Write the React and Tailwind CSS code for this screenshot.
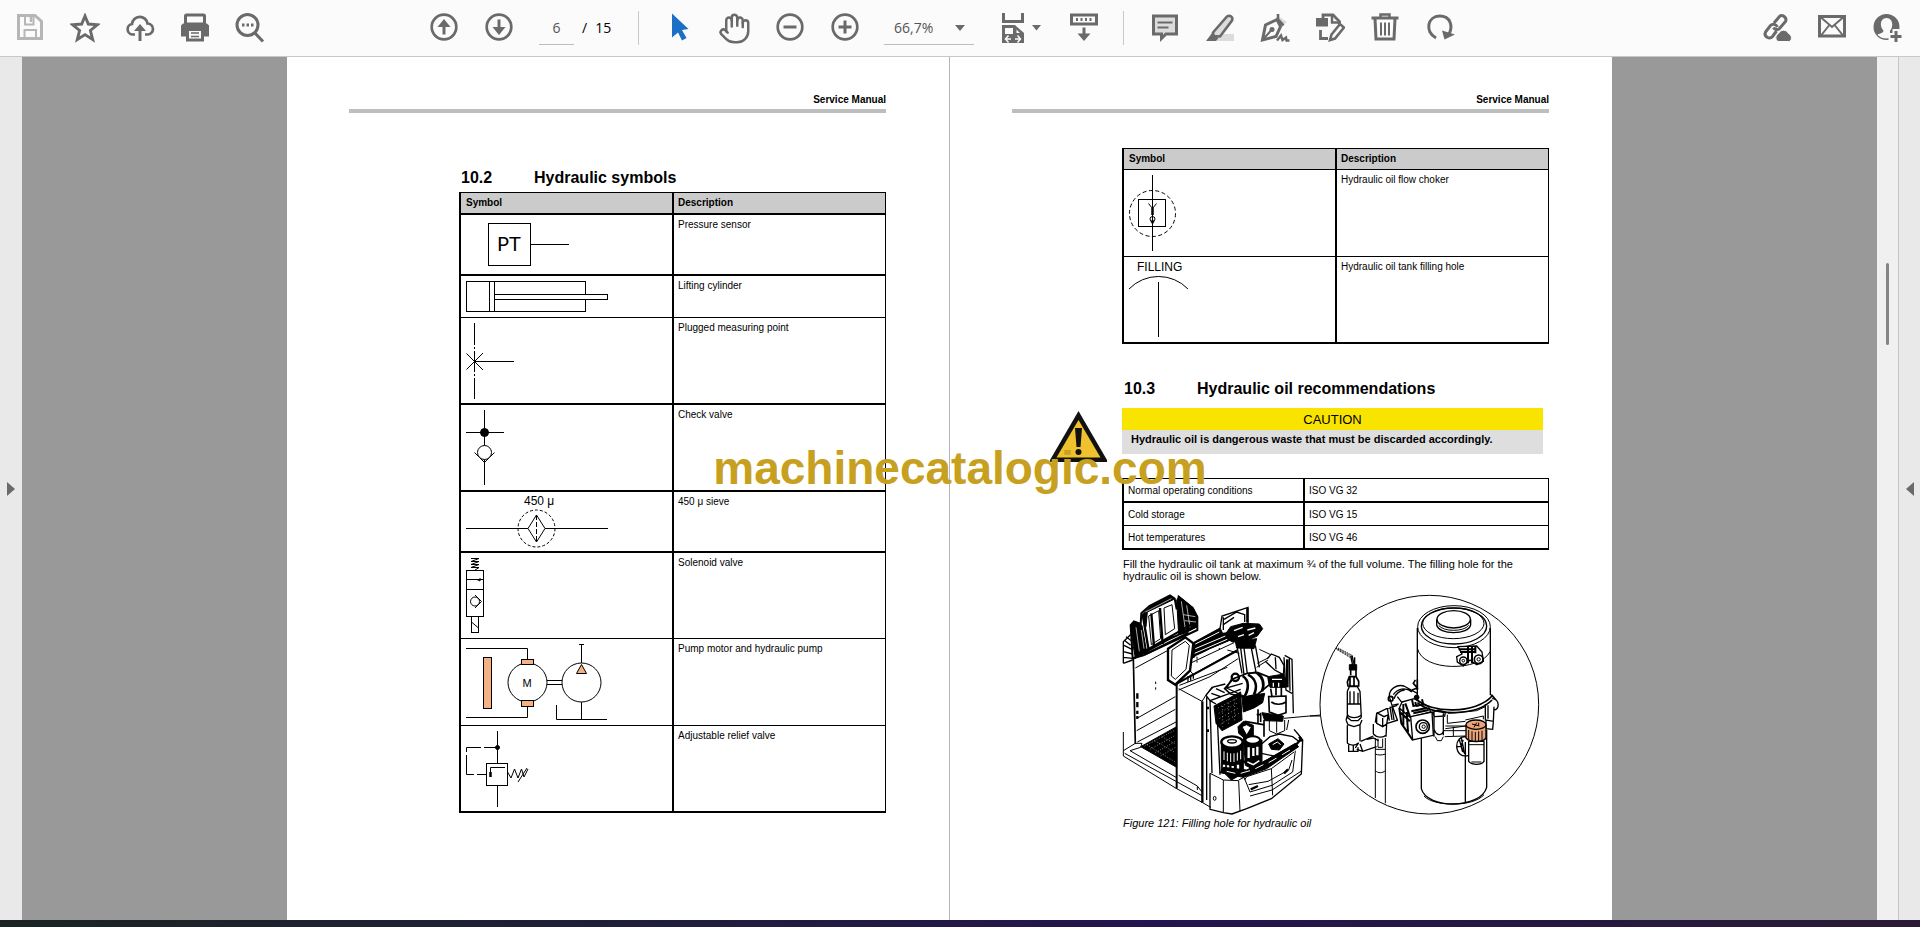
import { useState } from "react";
import { Hand } from "lucide-react";

function ToolIcon({ children }) {
  return (
    <svg width="30" height="30" viewBox="0 0 30 30" fill="none" stroke="#6a6a6a" strokeWidth="3">
      {children}
    </svg>
  );
}

function ToolButton({ label, children }) {
  return (
    <button aria-label={label} className="w-[55px] h-full flex items-center justify-center">
      {children}
    </button>
  );
}

function Separator() {
  return <div className="w-px h-[34px] bg-[#c9c9c9]" />;
}

function Toolbar() {
  const [page, setPage] = useState("6");
  const [zoom, setZoom] = useState("66,7%");

  return (
    <header className="h-[57px] shrink-0 flex items-center pl-[2px] pr-[6px] bg-[#fbfbfb] border-b border-[#c8c8c8] text-sm">
      {/* File tools */}
      <div className="flex h-full">
        <ToolButton label="Save">
          <ToolIcon>
            <g stroke="#b6b6b6">
              <path d="M3.500 2.500H20L26.500 8.500V25.500H3.500Z" />
              <path d="M10 2V11.500H18.500V2" strokeWidth="2" />
              <path d="M16 3.500V9" strokeWidth="2.500" />
              <path d="M9.500 25.500V17H21V25.500" strokeWidth="2" />
            </g>
          </ToolIcon>
        </ToolButton>
        <ToolButton label="Star">
          <ToolIcon>
            <path d="M15 3L18.300 11L27.500 11.700L20.400 17.500L22.700 26.500L15 21.600L7.300 26.500L9.600 17.500L2.500 11.700L11.700 11Z" strokeWidth="2.900" />
          </ToolIcon>
        </ToolButton>
        <ToolButton label="Upload">
          <ToolIcon>
            <path d="M10 21.500H7.500A5.300 5.300 0 0 1 7 11A7.800 7.800 0 0 1 22.500 10.500A5.500 5.500 0 0 1 22.500 21.500H20" strokeWidth="2.700" />
            <path d="M15 28V15" />
            <path d="M9 18L15 11L21 18Z" fill="#6a6a6a" stroke="none" />
          </ToolIcon>
        </ToolButton>
        <ToolButton label="Print">
          <ToolIcon>
            <rect x="5.500" y="2" width="19" height="9" rx="1" />
            <path d="M3 10.500H27L29 12.500V23.500H24V17.500H6V23.500H1V12.500Z" fill="#6a6a6a" stroke="none" />
            <rect x="7.500" y="16.500" width="15" height="10.500" fill="#fbfbfb" />
            <path d="M11 20H19M11 23.500H19" strokeWidth="1.500" />
          </ToolIcon>
        </ToolButton>
        <ToolButton label="Find">
          <ToolIcon>
            <circle cx="12.500" cy="12" r="10.500" />
            <path d="M19.500 19.500L28 28.500" />
            <path d="M7 12H18.500" strokeDasharray="2.500 2" />
          </ToolIcon>
        </ToolButton>
      </div>

      {/* Navigation and zoom */}
      <div className="flex items-center h-full ml-[139px]">
        <ToolButton label="Previous page">
          <ToolIcon>
            <circle cx="15" cy="14" r="12.300" strokeWidth="2.700" />
            <path d="M15 21.500V12" />
            <path d="M8.500 14L15 6L21.500 14Z" fill="#6a6a6a" stroke="none" />
          </ToolIcon>
        </ToolButton>
        <ToolButton label="Next page">
          <ToolIcon>
            <circle cx="15" cy="14" r="12.300" strokeWidth="2.700" />
            <path d="M15 6.500V17" />
            <path d="M8.500 14L15 22L21.500 14Z" fill="#6a6a6a" stroke="none" />
          </ToolIcon>
        </ToolButton>
        <div className="w-[112px] flex items-center pl-[13px] font-['Open_Sans',sans-serif]">
          <input
            aria-label="Page number"
            value={page}
            onChange={(e) => setPage(e.target.value)}
            className="w-[35px] h-[34px] text-center text-[#555] border-b border-[#bdbdbd] bg-transparent outline-none"
          />
          <span className="ml-2">/</span>
          <span className="ml-2">15</span>
        </div>
        <Separator />
        <div className="flex h-full ml-[13px]">
          <ToolButton label="Select">
            <ToolIcon>
              <path d="M7 0.500L23.500 16L17 17L21.500 25L17 27.500L13 19.500L7 24.500Z" fill="#1b70c5" stroke="none" />
            </ToolIcon>
          </ToolButton>
          <ToolButton label="Pan">
            <Hand size={33} color="#6a6a6a" strokeWidth={1.8} />
          </ToolButton>
          <ToolButton label="Zoom out">
            <ToolIcon>
              <circle cx="15" cy="14" r="12.300" strokeWidth="2.700" />
              <path d="M8.500 14H21.500" />
            </ToolIcon>
          </ToolButton>
          <ToolButton label="Zoom in">
            <ToolIcon>
              <circle cx="15" cy="14" r="12.300" strokeWidth="2.700" />
              <path d="M8.500 14H21.500M15 7.500V20.500" />
            </ToolIcon>
          </ToolButton>
        </div>
        <div className="relative ml-3 w-[90px] font-['Open_Sans',sans-serif]">
          <select
            aria-label="Zoom level"
            value={zoom}
            onChange={(e) => setZoom(e.target.value)}
            className="w-full h-[34px] pl-[10px] appearance-none text-[#555] border-b border-[#bdbdbd] bg-transparent outline-none"
          >
            <option>66,7%</option>
            <option>100%</option>
          </select>
          <svg className="absolute right-[9px] top-[14px] pointer-events-none" width="10" height="6" viewBox="0 0 10 6">
            <path d="M0 0H10L5 6Z" fill="#6a6a6a" />
          </svg>
        </div>
        <button aria-label="Fit width" className="ml-7 flex items-center gap-2">
          <svg width="22" height="30" viewBox="0 0 22 30" fill="none" stroke="#6a6a6a" strokeWidth="3">
            <path d="M1.500 0V8.500H20.500V0" />
            <path d="M0 12H13L22 20V30H0Z" fill="#6a6a6a" stroke="none" />
            <path d="M3 15H11V21H3Z M14.500 16.500V20H18Z" fill="#fbfbfb" stroke="none" />
            <path d="M3 26H9M13 26H19M6.500 22.500L3.500 26L6.500 29.500M15.500 22.500L18.500 26L15.500 29.500" stroke="#fbfbfb" strokeWidth="1.500" />
          </svg>
          <svg width="10" height="6" viewBox="0 0 10 6">
            <path d="M0 0H9L4.500 5.500Z" fill="#6a6a6a" />
          </svg>
        </button>
        <div className="flex h-full items-center ml-[14px]">
          <ToolButton label="Show toolbar">
            <ToolIcon>
              <rect x="2.500" y="2" width="25" height="9" />
              <path d="M7 6.500H24" strokeDasharray="2 2.500" />
              <path d="M15 14.500V22.500" />
              <path d="M8.500 20.500H21.500L15 28Z" fill="#6a6a6a" stroke="none" />
            </ToolIcon>
          </ToolButton>
        </div>
        <div className="ml-3">
          <Separator />
        </div>

        {/* Annotation tools */}
        <div className="flex h-full ml-[13px]">
          <ToolButton label="Comment">
            <ToolIcon>
              <path d="M3.500 3H26.500V21H16L11.500 25.500V21H3.500Z" fill="#dcdcdc" />
              <path d="M7.500 9.500H22.500M7.500 14.500H18.500" strokeWidth="2" />
            </ToolIcon>
          </ToolButton>
          <ToolButton label="Highlight">
            <ToolIcon>
              <path d="M10 21H29V28H8Z" fill="#dcdcdc" stroke="none" />
              <path d="M8 19.500L22 3.500C25 1.500 28.500 4 27 7.500L15 23.500L8.500 23Z" fill="#dcdcdc" strokeWidth="2.600" />
              <path d="M7 20L13.500 25L11 28H1Z" fill="#6a6a6a" stroke="none" />
            </ToolIcon>
          </ToolButton>
          <ToolButton label="Sign">
            <ToolIcon>
              <path d="M18 3L27 9L22 13L15 8Z" fill="#dcdcdc" stroke="none" />
              <path d="M18 1V6.500L23.500 12.500" strokeWidth="2.600" />
              <path d="M17 6.500L5.500 12L2.500 27L16 23.500L20.500 13.500Z" strokeWidth="3" />
              <path d="M2.500 27L11 17.500" strokeWidth="2" />
              <circle cx="12" cy="16.500" r="2.500" fill="#6a6a6a" stroke="none" />
              <path d="M17 27.500L21 22.500L22.500 27L26 24.500L26.500 27.500H29.500" strokeWidth="2.400" />
            </ToolIcon>
          </ToolButton>
          <ToolButton label="Edit">
            <ToolIcon>
              <path d="M1 5H13V13.500H1Z" fill="#6a6a6a" stroke="none" />
              <path d="M8 5V2H18L24.500 8.500V11" strokeWidth="2.800" />
              <path d="M17 3V9.500H24" strokeWidth="2.400" />
              <path d="M5.500 17V25.500H13" strokeWidth="2.800" />
              <path d="M15 27L16.500 21.500L25 11L29 14.500L20 25.500Z" strokeWidth="2.600" />
            </ToolIcon>
          </ToolButton>
          <ToolButton label="Delete">
            <ToolIcon>
              <path d="M1.500 5H28.500" />
              <path d="M10.500 4.500V1.500H19.500V4.500" strokeWidth="2.500" />
              <path d="M5 5.500L6 26H24L25 5.500" />
              <path d="M11 9.500V22.500M15 9.500V22.500M19 9.500V22.500" strokeWidth="2" />
            </ToolIcon>
          </ToolButton>
          <ToolButton label="Rotate">
            <ToolIcon>
              <path d="M11 25C-1 18.500 3 3 14.500 3C26 3 28 13.500 24 21" />
              <path d="M17 17.500L19.500 26.500L30 21.500Z" fill="#6a6a6a" stroke="none" />
            </ToolIcon>
          </ToolButton>
        </div>
      </div>

      {/* Sharing tools */}
      <div className="flex h-full ml-auto">
        <ToolButton label="Share link">
          <ToolIcon>
            <g strokeWidth="3">
              <path d="M12 10L17.500 3.500C20 1 25.500 4.500 23.500 8.500L17.500 15.500C15.500 17.500 12.500 16.500 11.500 14.500" />
              <path d="M14.500 18L10.500 23.500C7.500 27 1.500 23.500 3.500 19L8.500 12.500C10.500 10.500 14 11 15.500 14" />
            </g>
            <path d="M16 28.500A4.500 4.500 0 0 1 16.500 20.500A5.400 5.400 0 0 1 26.500 20.500A4.500 4.500 0 0 1 27.500 28.500Z" fill="#6a6a6a" stroke="#fbfbfb" strokeWidth="1" />
          </ToolIcon>
        </ToolButton>
        <ToolButton label="Email">
          <ToolIcon>
            <rect x="2.500" y="3.500" width="25" height="19.500" />
            <path d="M4 4.500L15 14L26 4.500M4 22.500L12 12.500M26 22.500L18 12.500" strokeWidth="2" />
          </ToolIcon>
        </ToolButton>
        <ToolButton label="Add people">
          <ToolIcon>
            <circle cx="14.500" cy="14" r="13" fill="#6a6a6a" stroke="none" />
            <path d="M14.500 5C10 5 8.500 9 9 12.500C9.300 15 10.500 16.500 11.500 17.500C11.500 20.500 7 20 5.500 22C8 24.500 11.500 25.500 14.500 25.500L18 25V17.500C19 16.500 20 15 20.200 12.500C20.500 9 19 5 14.500 5Z" fill="#fbfbfb" stroke="none" />
            <path d="M24 16V30M16.500 23.500H30" stroke="#fbfbfb" strokeWidth="7" />
            <path d="M18.500 23.500H29.500M24 18V29" />
          </ToolIcon>
        </ToolButton>
      </div>
    </header>
  );
}

/* Hydraulic symbols, drawn from the top left corner of their cell */

function SymbolDrawing({ height, children }) {
  return (
    <svg width="200" height={height} viewBox={`0 0 200 ${height}`} fill="none" stroke="#000" className="block">
      {children}
    </svg>
  );
}

function PressureSensor() {
  return (
    <SymbolDrawing height={59}>
      <rect x="27.500" y="8.500" width="42" height="42" />
      <path d="M69.500 29.500H108" />
      <text x="36" y="36" fontSize="20" fill="#000" stroke="none" className="font-['Lato',sans-serif]">PT</text>
    </SymbolDrawing>
  );
}

function LiftingCylinder() {
  return (
    <SymbolDrawing height={41}>
      <rect x="5.500" y="5.500" width="119" height="30" />
      <path d="M28.500 5.500V35.500M33.500 5.500V35.500" />
      <rect x="33.500" y="18.500" width="113" height="5" fill="#fff" />
    </SymbolDrawing>
  );
}

function MeasuringPoint() {
  return (
    <SymbolDrawing height={85}>
      <path d="M13.500 5V27M13.500 29V31M13.500 33V54M13.500 56V58M13.500 60V81M13.500 43.500H53M5.500 35.500L22 52M5.500 51.500L22 35" />
    </SymbolDrawing>
  );
}

function CheckValve() {
  return (
    <SymbolDrawing height={85}>
      <path d="M23.500 5V80M5 27.500H43M13.500 47.500L23.500 57.500L33.500 47.500" />
      <circle cx="23.500" cy="27.500" r="4" fill="#000" />
      <circle cx="23.500" cy="47.500" r="7" fill="#fff" />
    </SymbolDrawing>
  );
}

function Sieve() {
  return (
    <SymbolDrawing height={59}>
      <text x="63" y="13" fontSize="12" fill="#000" stroke="none">450 μ</text>
      <circle cx="75.500" cy="36.500" r="18.500" strokeDasharray="3 2" />
      <path d="M5 36.500H67M84 36.500H147M67 36.500L75.500 23L84 36.500L75.500 50Z" />
      <path d="M75.500 23V50" strokeDasharray="5 2" />
    </SymbolDrawing>
  );
}

function SolenoidValve() {
  return (
    <SymbolDrawing height={85}>
      <path d="M10 5.500H18L10 8.500H18L10 11.500H18L10 14.500H18L14 17" />
      <rect x="5.500" y="17.500" width="17" height="46" />
      <path d="M5.500 26.500H22.500M5.500 36.500H22.500M19 25V28L16 26.500" />
      <circle cx="14" cy="48.500" r="4.500" />
      <path d="M14 42L20.500 48.500L14 55" />
      <rect x="10.500" y="63.500" width="7" height="16" />
      <path d="M10.500 69L17.500 75" />
    </SymbolDrawing>
  );
}

function PumpMotor() {
  return (
    <SymbolDrawing height={86}>
      <path d="M5 9.500H66.500V20M66.500 68V78.500H5" />
      <circle cx="66.500" cy="43.500" r="19.500" />
      <g fill="#f4b183">
        <rect x="22.500" y="18.500" width="8" height="51" />
        <rect x="60.500" y="20.500" width="12" height="5" />
        <rect x="60.500" y="61.500" width="12" height="6" />
      </g>
      <text x="66" y="48" fontSize="11" textAnchor="middle" fill="#000" stroke="none">M</text>
      <path d="M86 41.500H101M86 45.500H101M120.500 6V24M118 5.500H123M120.500 63V80M95.500 66V80.500H146" />
      <circle cx="120.500" cy="43.500" r="19.500" />
      <path d="M120.500 25.500L125.500 34.500H115.500Z" fill="#f4b183" />
    </SymbolDrawing>
  );
}

function ReliefValve() {
  return (
    <SymbolDrawing height={85}>
      <path d="M36.500 5V37M36.500 59V81" />
      <circle cx="36.500" cy="21.500" r="2" fill="#000" />
      <path d="M36 21.500H23M20 21.500H5.500V26M5.500 29V48.500H13M16 48.500H25" />
      <rect x="25.500" y="37.500" width="21" height="22" />
      <path d="M44 41.500H29.500V51" />
      <path d="M29.500 46V51" strokeWidth="2.500" />
      <path d="M46.500 46L50 52L53.500 43L57 52L60.500 43L63 51L67 43M57 56L66 42" />
    </SymbolDrawing>
  );
}

function FlowChoker() {
  return (
    <SymbolDrawing height={86}>
      <circle cx="28.500" cy="43.500" r="23" strokeDasharray="4 2.500" />
      <rect x="14.500" y="29.500" width="27" height="27" />
      <path d="M28.500 5V81M24.500 33.500L28.500 38.500L32.500 33.500" />
      <path d="M28.500 38V45" strokeWidth="2.500" />
      <circle cx="28.500" cy="49" r="2.500" />
      <path d="M27 51H30L28.500 54Z" fill="#000" />
    </SymbolDrawing>
  );
}

function FillingHole() {
  return (
    <SymbolDrawing height={85}>
      <text x="13" y="14" fontSize="12" fill="#000" stroke="none">FILLING</text>
      <path d="M5 32A41 41 0 0 1 64 32M34.500 25V80" />
    </SymbolDrawing>
  );
}

const symbolsLeft = [
  { name: "Pressure sensor", drawing: <PressureSensor />, line: "border-b-2" },
  { name: "Lifting cylinder", drawing: <LiftingCylinder />, line: "border-b" },
  { name: "Plugged measuring point", drawing: <MeasuringPoint />, line: "border-b-2" },
  { name: "Check valve", drawing: <CheckValve />, line: "border-b-2" },
  { name: "450 μ sieve", drawing: <Sieve />, line: "border-b-2" },
  { name: "Solenoid valve", drawing: <SolenoidValve />, line: "border-b" },
  { name: "Pump motor and hydraulic pump", drawing: <PumpMotor />, line: "border-b" },
  { name: "Adjustable relief valve", drawing: <ReliefValve />, line: "border-b-2" },
];

const symbolsRight = [
  { name: "Hydraulic oil flow choker", drawing: <FlowChoker />, line: "border-b" },
  { name: "Hydraulic oil tank filling hole", drawing: <FillingHole />, line: "border-b-2" },
];

const oils = [
  { use: "Normal operating conditions", grade: "ISO VG 32", line: "border-b-2" },
  { use: "Cold storage", grade: "ISO VG 15", line: "border-b" },
  { use: "Hot temperatures", grade: "ISO VG 46", line: "border-b-2" },
];

function SymbolTable({ rows, headLine }) {
  return (
    <table className="w-full table-fixed border-separate border-spacing-0 border-t border-l-2 border-r border-black text-[10px] leading-3">
      <thead>
        <tr className="bg-[#cbcbcb] text-left">
          <th className={`w-[213px] px-[5px] py-1 border-black border-r-2 ${headLine}`}>Symbol</th>
          <th className={`px-1 py-1 border-black ${headLine}`}>Description</th>
        </tr>
      </thead>
      <tbody>
        {rows.map((row) => (
          <tr key={row.name}>
            <td className={`p-0 align-top border-black border-r-2 ${row.line}`}>{row.drawing}</td>
            <td className={`px-1 py-1 align-top border-black ${row.line}`}>{row.name}</td>
          </tr>
        ))}
      </tbody>
    </table>
  );
}

function Page({ children }) {
  return (
    <section className="w-[662px] shrink-0 bg-white pt-[37px] pl-[62px] pr-[63px]">
      <div className="text-right text-[10px] leading-3 font-bold">Service Manual</div>
      <div className="mt-[3px] h-1 bg-[#bdbfbf]" />
      {children}
    </section>
  );
}

function Heading({ number, children }) {
  return (
    <h2 className="flex pl-[2px] text-base leading-5 font-bold">
      <span className="w-[73px]">{number}</span>
      {children}
    </h2>
  );
}

function HydraulicFigure() {
  return (
    <svg viewBox="0 0 1281 687" fill="none" stroke="#000" strokeWidth="3" className="block w-full">
      {/* Truck */}
      <g transform="translate(-36 -21)">
        {/* Backrest */}
        <path d="M68 235L62 135L72 124L92 132L94 100L118 78L180 46L194 56L200 88L206 50L248 84L262 110V150L100 226Z" fill="#fff" strokeWidth="6" />
        <path d="M40 250V185L66 160M40 215L68 222M40 232L68 235M40 250L68 240M42 180L62 196M42 196L66 208M48 170L66 184" strokeWidth="4" />
        <path d="M62 136L72 126L96 136L110 216L76 234L70 200Z" fill="#000" />
        <path d="M78 142L88 214M94 150L102 206" stroke="#fff" strokeWidth="2" />
        <path d="M96 104L120 80L182 48L192 58L112 96L108 140Z" fill="#000" />
        <path d="M106 96L184 56" stroke="#fff" strokeWidth="2" />
        <path d="M98 104L116 210M124 100L132 200M150 84L158 192" strokeWidth="7" />
        <path d="M116 108L146 92L152 176L124 194ZM162 84L186 74L194 146L166 164Z" />
        <path d="M200 60L208 50L250 84L260 112L262 140L224 160L206 164Z" fill="#000" />
        <path d="M214 64L226 148M230 76L240 142M220 104L256 110M224 122L258 126" stroke="#fff" strokeWidth="2" />
        <path d="M70 236L176 178L262 138M96 218L250 130M104 224L236 158" strokeWidth="6" />
        {/* Side wall */}
        <path d="M70 236L76 492" strokeWidth="5" />
        <path d="M76 264L172 212M79 416L196 350M80 452L196 388M82 486L198 426" />
        <path d="M82 340V356M82 366V382M82 392V402M82 408V416" strokeWidth="7" />
        <path d="M137 305V312M137 322V329M261 230V238M261 242V248M328 188V194M328 204V210" />
        {/* Floor */}
        <path d="M92 500L200 440V562Z" fill="#000" />
        <path d="M104 498L192 452M120 508L196 466M136 518L196 484M152 528L196 502M110 494L196 546M134 482L196 518M156 470L196 492" stroke="#fff" strokeWidth="1.500" strokeDasharray="3 5" />
        <path d="M40 456V528L200 626L278 668M40 512L76 490L96 490L92 502L60 512L198 592M44 520L198 604L278 648M206 586L262 618L276 636" />
        {/* Cabinet */}
        <path d="M200 312V626" strokeWidth="6" />
        <path d="M277 364V668" strokeWidth="7" />
        <path d="M206 326L276 364L290 342L310 322M208 316L352 262M206 330L300 290L384 236M352 210L388 220M262 620V630" />
        <path d="M198 312L250 284L382 212" strokeWidth="6" />
        {/* Rear rail */}
        <path d="M246 190L330 144L338 160L366 156L372 176L300 206L244 236Z" fill="#000" />
        <path d="M256 192L328 156M256 206L346 168M254 220L356 176M256 230L366 182" stroke="#fff" strokeWidth="3" />
        <path d="M330 146L336 108L414 82V130M340 112V150M342 118L380 96L404 104V126M340 134L372 112" strokeWidth="4" />
        <path d="M412 84V128" strokeWidth="7" />
        <path d="M232 262L250 284M236 290L380 210M240 250L372 188" />
        {/* Grab handle */}
        <path d="M174 206L226 172L250 190L240 272L196 314L174 300Z" strokeWidth="7" fill="#fff" />
        <path d="M186 210L226 184L238 196L228 268L196 298L184 288Z" />
        <path d="M234 288V306M242 284V302M250 282V296" strokeWidth="4" />
        {/* Steering wheel */}
        <path d="M348 160L362 140L400 130L448 132L458 146L442 168L404 184L368 186L350 176Z" fill="#000" />
        <path d="M372 152L398 142M412 150L436 144M384 170L402 164M416 166L432 158" stroke="#fff" strokeWidth="4" />
        <path d="M376 184L380 204L432 206L440 176Z" fill="#000" />
        <path d="M392 204L402 284L438 276L424 204Z" fill="#fff" strokeWidth="4" />
        <path d="M402 204L412 282M382 204L396 280M436 196L448 262" strokeWidth="4" />
        <path d="M448 208L482 224M442 250L478 232M440 262L474 240" />
        {/* Steering column base */}
        <path d="M344 326L370 296L412 280L444 278L474 290L478 314L444 342L404 352L362 342Z" fill="#fff" strokeWidth="5" />
        <path d="M398 288C420 302 416 330 402 352M414 284C440 298 442 322 432 344M440 278C460 292 464 312 456 334" strokeWidth="8" />
        <circle cx="376" cy="292" r="11" strokeWidth="7" />
        <path d="M364 298L350 324L398 310M350 324L404 350" strokeWidth="4" />
        {/* Battery block */}
        <path d="M312 378L392 336L396 420L336 452L318 430Z" fill="#000" />
        <path d="M324 384L386 352M326 400L388 366M328 416L388 382M332 432L390 398M338 378V440M356 368V432M374 358V424" stroke="#fff" strokeWidth="1.500" strokeDasharray="3 7" />
        <path d="M396 352L464 340L458 368L432 384L400 396Z" fill="#000" />
        <path d="M288 346L306 322L346 312M288 346L300 362L392 328M300 362L318 372M304 340L332 350M318 326L344 338M290 352V660M300 360L306 580M320 376L330 584" strokeWidth="4" />
        <path d="M294 380V388M294 448V456" strokeWidth="6" />
        {/* Right post */}
        <path d="M472 236L484 222L508 232L522 256L520 288M524 226L546 238L550 400M538 236L540 332M522 232L528 330L546 340M466 244L494 270L520 284M496 232L498 268" strokeWidth="4" />
        <path d="M532 238V322" strokeWidth="8" />
        <path d="M474 290L522 282L526 322H480Z" fill="#000" />
        <path d="M486 298H516M490 308V320M506 308V320" stroke="#fff" strokeWidth="4" />
        <path d="M498 320V346M514 320V348M482 326L486 350" strokeWidth="5" />
        <path d="M476 350L528 348V398L504 406L478 396ZM484 366C496 376 516 374 528 366" strokeWidth="5" />
        <path d="M456 398L520 408L518 424L464 422Z" fill="#000" />
        <path d="M478 420V452L500 462L524 452V420M500 424V458M536 420L530 450" />
        <path d="M444 388V428M440 404H452M452 398V426M462 420V470M460 434L404 424" strokeWidth="5" />
        <path d="M521 415L632 405" />
        {/* Motors */}
        <path d="M384 440L400 424L430 436V468L408 478L386 460Z" fill="#000" />
        <path d="M396 440L410 434L424 442L410 466Z" fill="#fff" />
        <path d="M334 488V570L364 600L400 580V488Z" fill="#000" />
        <ellipse cx="366" cy="486" rx="32" ry="17" fill="#fff" strokeWidth="7" />
        <ellipse cx="366" cy="484" rx="13" ry="5" strokeWidth="4" />
        <path d="M342 514V540M352 518V544M362 520V546M372 520V546M382 518V542M392 512V538" stroke="#fff" strokeWidth="3" />
        <path d="M342 554V568M354 556V574M368 558V574M384 554V568" stroke="#fff" strokeWidth="7" />
        <path d="M400 470L406 556L426 566L456 544V480Z" fill="#000" />
        <ellipse cx="428" cy="480" rx="22" ry="11" fill="#fff" strokeWidth="6" />
        <path d="M416 502V534M430 504V528M442 500V526" stroke="#fff" strokeWidth="7" />
        <path d="M412 546L430 554L448 542" stroke="#fff" strokeWidth="5" />
        <path d="M396 540L430 566L456 550L560 492L574 476" strokeWidth="7" />
        <path d="M330 578L400 592L470 566L566 500L556 490L470 540L410 570L340 562Z" fill="#000" />
        <path d="M350 574L376 580M392 580L420 572M436 566L460 554M476 548L500 534M516 524L540 510" stroke="#fff" strokeWidth="3" />
        <path d="M448 498L480 470L508 462L548 470L566 484M454 520L500 530L552 496" strokeWidth="4" />
        <path d="M476 492L504 476L522 492L508 510L484 508Z" fill="#000" />
        <path d="M488 494L502 486L512 494" stroke="#fff" />
        {/* Front bumper */}
        <path d="M300 580V688L340 698L366 702L410 686L484 656L574 582L578 480L564 462L552 448" strokeWidth="4" />
        <path d="M568 470L576 484" strokeWidth="8" />
        <path d="M300 580L340 600V696M340 600L386 602L390 694M386 600L402 592L420 636L486 616L548 576L556 512M404 600L410 590L484 566L552 516M484 566L488 646M416 614L474 604L536 570L546 540M420 648L486 630L576 572" />
        <path d="M422 628L444 618M522 580L534 568" strokeWidth="7" />
        <ellipse cx="314" cy="655" rx="4" ry="6" />
        <path d="M278 668L302 682" />
      </g>

      {/* Pump detail */}
      <g transform="translate(564 -21)">
        <circle cx="358" cy="374" r="328" />
        <path d="M0 408H31" />
        {/* Upper cylinder */}
        <path d="M322 144V360M541 144V346" strokeWidth="4" />
        <ellipse cx="432" cy="140" rx="109" ry="63" />
        <ellipse cx="432" cy="138" rx="98" ry="54" strokeWidth="4" />
        <ellipse cx="430" cy="130" rx="92" ry="46" />
        <path d="M380 118V134C384 166 478 166 482 134V118" strokeWidth="4" />
        <ellipse cx="431" cy="118" rx="50" ry="26" strokeWidth="4" />
        <path d="M386 136C400 156 462 156 476 136M322 204C336 276 510 276 541 214" />
        <path d="M444 200L500 198L516 216L520 244L500 254L480 240L460 258L442 246L440 230L456 222Z" fill="#fff" strokeWidth="4" />
        <circle cx="506" cy="238" r="13" strokeWidth="5" />
        <circle cx="506" cy="238" r="5" />
        <circle cx="460" cy="242" r="11" strokeWidth="4" />
        <circle cx="460" cy="242" r="4" />
        <path d="M446 208H498M450 216H494M474 200V250M486 200V250M496 200V220" strokeWidth="6" />
        <path d="M318 356C360 402 500 402 546 348M322 368C370 410 500 408 546 360M316 348L322 360M544 344L558 360" strokeWidth="5" />
        {/* Flange */}
        <path d="M546 356C570 356 570 392 550 390M526 372V420L550 424L552 380M528 420V446L548 448L550 426M534 376V416" strokeWidth="4" />
        <path d="M372 394V470M400 400V466M372 448C380 470 396 468 402 450M366 398L384 390L406 396L404 408L374 410Z" strokeWidth="4" />
        <path d="M376 470L382 482H394L400 470M412 404V430L466 424M406 438H470M406 446L468 438M414 400L500 392L526 380M466 420L520 408V418M400 452H468M404 470L466 468M430 440V468" />
        {/* Solenoid coil */}
        <path d="M276 366L312 356L356 380L362 396L300 412L268 384Z" strokeWidth="4" />
        <path d="M302 410L366 396L370 466L308 480Z" strokeWidth="4" fill="#fff" />
        <path d="M268 384L274 430L308 480M280 372V436M290 396L294 456M286 370L300 410M272 398L300 424" strokeWidth="6" />
        <circle cx="338" cy="440" r="20" strokeWidth="5" />
        <circle cx="340" cy="440" r="12" strokeWidth="4" />
        <circle cx="341" cy="440" r="5" />
        <path d="M306 358L310 378L340 374L336 358M318 378L316 366M304 394L350 384M310 400L356 390" strokeWidth="6" />
        <path d="M322 374V380" strokeWidth="8" />
        <path d="M316 300L310 310L322 324L306 330M322 298V330" strokeWidth="5" />
        <path d="M238 350C236 326 262 312 282 318L322 340M246 376L262 420M250 344C262 326 286 320 306 336M238 350L246 376L266 372M252 356C258 340 268 332 284 330M262 350L276 368" strokeWidth="4" />
        <circle cx="242" cy="356" r="7" strokeWidth="5" />
        <circle cx="320" cy="352" r="7" fill="#000" />
        {/* Elbow and hose */}
        <path d="M264 420L232 430M262 376L230 386L200 400L196 428M232 384L238 422M246 380L252 420M240 380L246 420M200 398L222 410L236 404M200 398V430L218 440L230 432L234 408M218 414V440M190 432V462M230 432L228 470M190 462C200 474 220 474 228 466" strokeWidth="4" />
        <path d="M196 474V654M226 474V670M196 508H226M196 522C204 526 216 526 226 522M196 572C204 580 218 580 226 572M204 476V502H218V476" />
        <path d="M190 468L152 484M200 500L158 514L140 508M150 492L158 514M146 488L136 504M170 478L190 474L206 482" strokeWidth="4" />
        {/* Fitting */}
        <path d="M78 204L122 228M80 208L120 232M84 204L126 226" strokeDasharray="4 2" />
        <path d="M126 226L132 252M122 228L128 256M134 232V256" strokeWidth="4" />
        <path d="M118 254H140V270H118Z" fill="#000" />
        <path d="M122 270V286M138 270V288M112 306L118 290H138L146 304V318H114ZM120 290V318M132 290V318" strokeWidth="5" />
        <path d="M112 334L118 320H142L150 334L154 412M112 334V412L124 422H144L154 412M120 334V372M132 334V372M144 338V372M112 372H152M112 404C120 416 144 416 154 404" strokeWidth="4" />
        <path d="M108 420L114 434L132 440L150 434L156 420M112 436V490M150 436V484M112 490C120 496 136 498 144 490M116 494V514H130V496M130 514H144V502M108 420L112 408" strokeWidth="4" />
        {/* Tank */}
        <path d="M334 474V626C350 688 512 688 530 622V450M466 486V668" strokeWidth="4" />
        <path d="M342 648C370 680 490 682 522 644" />
        {/* Filler neck */}
        <path d="M476 470C448 466 440 484 440 500C442 522 456 532 476 526M448 478L458 516M454 474L464 522M440 500H456M460 480C450 496 454 512 468 522" strokeWidth="4" />
        <path d="M476 484V544C486 556 514 556 522 544V484Z" fill="#fff" strokeWidth="4" />
        <path d="M476 494H522M484 546H514" />
        <path d="M468 436V474C480 488 518 488 528 474V436Z" fill="#eaa57a" strokeWidth="4" />
        <ellipse cx="498" cy="434" rx="30" ry="14" fill="#eaa57a" strokeWidth="4" />
        <path d="M476 450V478M486 454V482M496 456V484M506 454V484M516 452V480M486 432L508 438M500 428L492 442M506 428V436" />
      </g>
    </svg>
  );
}

function WarningTriangle() {
  return (
    <svg width="57" height="51" viewBox="0 0 57 51" className="mt-[3px]">
      <path d="M28.500 0L57 49V51H0V49Z" fill="#111" />
      <path d="M28.500 9L50.500 46.500H6.500Z" fill="#efc22d" />
      <path d="M25 17H32L30.500 36H26.500Z" fill="#111" />
      <circle cx="28.500" cy="41" r="3" fill="#111" />
    </svg>
  );
}

function App() {
  return (
    <div className="relative h-screen flex flex-col overflow-hidden font-['Liberation_Sans',Arial,sans-serif] text-black">
      <Toolbar />

      <div className="flex flex-1 min-h-0">
        <button aria-label="Open left panel" className="w-[22px] flex items-center justify-center bg-[#e9e9e9]">
          <svg width="8" height="14" viewBox="0 0 8 14">
            <path d="M0 0L8 7L0 14Z" fill="#6a6a6a" />
          </svg>
        </button>

        <main className="flex-1 flex justify-center overflow-hidden bg-[#999]">
          <Page>
            <div className="ml-[110px] mt-[55px]">
              <Heading number="10.2">Hydraulic symbols</Heading>
              <div className="mt-1">
                <SymbolTable rows={symbolsLeft} headLine="border-b-2" />
              </div>
            </div>
          </Page>
          <div className="w-px shrink-0 bg-[#b5b5b5]" />
          <Page>
            <div className="ml-[110px] mt-[35px]">
              <SymbolTable rows={symbolsRight} headLine="border-b" />
            </div>
            <div className="ml-[110px] mt-[35px]">
              <Heading number="10.3">Hydraulic oil recommendations</Heading>
            </div>

            {/* Caution box */}
            <div className="flex items-start mt-[9px] pr-[6px]">
              <div className="w-[110px] shrink-0 flex justify-end pr-[15px]">
                <WarningTriangle />
              </div>
              <div className="flex-1">
                <div className="h-[22px] bg-[#f9e400] text-center text-[13px] leading-6">CAUTION</div>
                <div className="h-6 px-[9px] bg-[#dedede] text-[11px] leading-[18px] font-bold">
                  Hydraulic oil is dangerous waste that must be discarded accordingly.
                </div>
              </div>
            </div>

            <div className="ml-[110px] mt-4">
              <table className="w-full table-fixed border-separate border-spacing-0 border-t border-l-2 border-r border-black text-[10px] leading-3">
                <tbody>
                  {oils.map((oil) => (
                    <tr key={oil.use}>
                      <td className={`w-[181px] px-1 pt-[6px] pb-1 border-black border-r-2 ${oil.line}`}>{oil.use}</td>
                      <td className={`px-1 pt-[6px] pb-1 border-black ${oil.line}`}>{oil.grade}</td>
                    </tr>
                  ))}
                </tbody>
              </table>
              <p className="mt-2 pl-px text-[11px] leading-3">
                Fill the hydraulic oil tank at maximum ¾ of the full volume. The filling hole for the
                hydraulic oil is shown below.
              </p>
              <figure className="mt-[5px]">
                <HydraulicFigure />
                <figcaption className="mt-px pl-px text-[11px] leading-3 italic">
                  Figure 121: Filling hole for hydraulic oil
                </figcaption>
              </figure>
            </div>
          </Page>
        </main>

        {/* Scroll bar */}
        <div className="w-[21px] flex justify-center pt-[206px] bg-[#f0f0f0]">
          <div className="w-[3px] h-[82px] rounded bg-[#858585]" />
        </div>
        <button aria-label="Open right panel" className="w-[22px] flex items-center justify-center bg-[#e9e9e9] border-l border-[#c6c6c6]">
          <svg width="8" height="14" viewBox="0 0 8 14">
            <path d="M8 0L0 7L8 14Z" fill="#6a6a6a" />
          </svg>
        </button>
      </div>

      <div className="h-[7px] shrink-0 bg-linear-to-r from-[#1a2422] via-[#25134f] via-60% to-[#2a1a35]" />

      {/* Watermark */}
      <div className="absolute inset-0 pt-[9px] flex items-center justify-center pointer-events-none text-[46px] leading-none font-bold text-[#c6a01e]">
        machinecatalogic.com
      </div>
    </div>
  );
}

export default App;
